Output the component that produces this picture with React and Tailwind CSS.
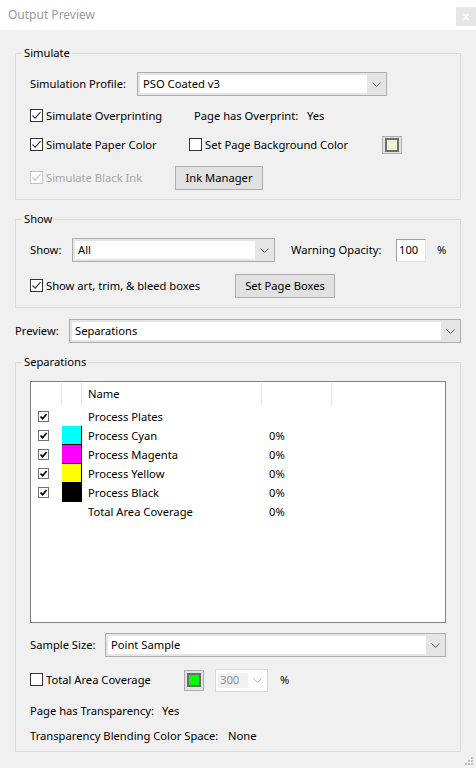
import { useState } from 'react'

const FONT = "font-['Noto_Sans','DejaVu_Sans',sans-serif] text-[11.2px]"

function Check({ checked, disabled }) {
  return (
    <span className={`w-[13px] h-[13px] shrink-0 border bg-white flex items-center justify-center ${disabled ? 'border-[#c4c4c4]' : 'border-[#333333]'}`}>
      {checked && (
        <svg width="11" height="11" viewBox="0 0 11 11">
          <polyline points="1.5,5.5 4.2,8.2 9.5,2.2" fill="none" stroke={disabled ? '#c4c4c4' : '#333333'} strokeWidth="1.1" />
        </svg>
      )}
    </span>
  )
}

function SmallCheck() {
  return (
    <span className="w-[11px] h-[11px] border border-[#707070] bg-white flex items-center justify-center">
      <svg width="9" height="9" viewBox="0 0 9 9">
        <polyline points="1.5,4.5 3.6,6.8 7.6,2" fill="none" stroke="#000" strokeWidth="1.7" />
      </svg>
    </span>
  )
}

function Chevron({ color = '#555555' }) {
  return (
    <svg width="9" height="5" viewBox="0 0 9 5">
      <polyline points="0.5,0.5 4.5,4.5 8.5,0.5" fill="none" stroke={color} strokeWidth="1" />
    </svg>
  )
}

function Dropdown({ w, value }) {
  return (
    <div className={`${w} h-[24px] border border-[#adadad] bg-[#e5e5e5] flex items-center`}>
      <div className="flex-1 h-[18px] ml-[2px] bg-white flex items-center pl-[3px] leading-none">{value}</div>
      <div className="w-[19px] flex items-center justify-center"><Chevron /></div>
    </div>
  )
}

function Button({ w, children }) {
  return (
    <div className={`${w} h-[24px] border border-[#adadad] bg-[#e1e1e1] flex items-center justify-center`}>{children}</div>
  )
}

function Swatch({ color, h = 'h-[18px]' }) {
  return (
    <div className={`w-[20px] ${h} border border-[#adadad] bg-[#e1e1e1] flex items-center justify-center`}>
      <div className="w-[14px] h-[14px] border-2 border-[#6d6d6d]" style={{ background: color }} />
    </div>
  )
}

function Group({ title, children, className = '' }) {
  return (
    <fieldset className={`border border-[#dcdcdc] pl-[14px] pb-[9px] ${className}`}>
      <legend className="ml-[-8px] px-[2px] leading-[16px]">{title}</legend>
      {children}
    </fieldset>
  )
}

const plates = [
  { name: 'Process Plates', check: true },
  { name: 'Process Cyan', check: true, color: 'bg-[#00ffff]', pct: '0%' },
  { name: 'Process Magenta', check: true, color: 'bg-[#ff00ff]', pct: '0%' },
  { name: 'Process Yellow', check: true, color: 'bg-[#ffff00]', pct: '0%' },
  { name: 'Process Black', check: true, color: 'bg-[#000000]', pct: '0%' },
  { name: 'Total Area Coverage', pct: '0%' },
]

export default function App() {
  const [opacity] = useState('100')

  return (
    <div className={`w-[476px] h-[768px] bg-[#f0f0f0] text-black relative overflow-hidden ${FONT}`}>
      <div className="h-[30px] bg-white flex items-start justify-between">
        <span className="pl-[8px] pt-[6px] text-[#9a9a9a] text-[12px]">Output Preview</span>
        <div className="mt-[7px] w-[20px] h-[19px] bg-[#e6e6e6] flex items-center justify-center text-white text-[10px] font-bold">x</div>
      </div>

      <div className="px-[15px] pt-[15px]">
        <Group title="Simulate">
          <div className="mt-[11px] h-[24px] flex items-center">
            <span className="w-[107px]">Simulation Profile:</span>
            <Dropdown w="w-[250px]" value="PSO Coated v3" />
          </div>
          <div className="mt-[10px] h-[20px] flex items-center">
            <div className="w-[164px] flex items-center gap-[3px]"><Check checked /><span>Simulate Overprinting</span></div>
            <span className="w-[113px]">Page has Overprint:</span>
            <span>Yes</span>
          </div>
          <div className="mt-[9px] h-[20px] flex items-center">
            <div className="w-[159px] flex items-center gap-[3px]"><Check checked /><span>Simulate Paper Color</span></div>
            <div className="w-[193px] flex items-center gap-[3px]"><Check /><span>Set Page Background Color</span></div>
            <Swatch color="#efefd6" />
          </div>
          <div className="mt-[11px] h-[24px] flex items-center">
            <div className="w-[145px] flex items-center gap-[3px] text-[#a6a6a6]"><Check checked disabled /><span>Simulate Black Ink</span></div>
            <Button w="w-[88px]">Ink Manager</Button>
          </div>
        </Group>

        <Group title="Show" className="mt-[11px]">
          <div className="mt-[11px] h-[24px] flex items-center">
            <span className="w-[42px]">Show:</span>
            <Dropdown w="w-[203px]" value="All" />
            <span className="ml-[16px] w-[105px]">Warning Opacity:</span>
            <div className="w-[30px] h-[23px] bg-white border-t border-l border-[#a0a0a0] border-r-[#e3e3e3] border-b-[#e3e3e3] border-r border-b flex items-center pl-[2px]">{opacity}</div>
            <span className="ml-[11px]">%</span>
          </div>
          <div className="mt-[12px] h-[24px] flex items-center">
            <div className="w-[205px] flex items-center gap-[3px]"><Check checked /><span>Show art, trim, &amp; bleed boxes</span></div>
            <Button w="w-[100px]">Set Page Boxes</Button>
          </div>
        </Group>

        <div className="mt-[11px] h-[24px] flex items-center">
          <span className="w-[54px]">Preview:</span>
          <div className="flex-1"><Dropdown w="w-full" value="Separations" /></div>
        </div>

        <Group title="Separations" className="mt-[11px] !pb-[5px]">
          <div className="mt-[11px] w-[416px] h-[242px] border border-[#828282] bg-white">
            <div className="h-[25px] pt-[1px] flex">
              <div className="w-[31px] h-[23px] border-r border-[#e5e5e5]" />
              <div className="w-[20px] h-[23px] border-r border-[#e5e5e5]" />
              <div className="w-[180px] h-[23px] border-r border-[#e5e5e5] pl-[6px] flex items-center">Name</div>
              <div className="w-[70px] h-[23px] border-r border-[#e5e5e5]" />
            </div>
            {plates.map(p => (
              <div key={p.name} className="h-[19px] flex items-center">
                <div className="w-[31px] pl-[7px] flex items-center">{p.check && <SmallCheck />}</div>
                <div className="w-[20px] h-full">
                  {p.color && <div className={`w-full h-full border-r border-b border-black ${p.color}`} />}
                </div>
                <div className="w-[180px] pl-[6px] pt-[1px]">{p.name}</div>
                <div className="pl-[7px] pt-[1px]">{p.pct}</div>
              </div>
            ))}
          </div>

          <div className="mt-[10px] h-[24px] flex items-center">
            <span className="w-[75px]">Sample Size:</span>
            <Dropdown w="w-[341px]" value="Point Sample" />
          </div>

          <div className="mt-[11px] h-[24px] flex items-center">
            <div className="w-[154px] flex items-center gap-[3px]"><Check /><span>Total Area Coverage</span></div>
            <Swatch color="#00ff00" h="h-[21px]" />
            <div className="ml-[11px] w-[53px] h-[23px] border border-[#d9d9d9] bg-white flex items-center">
              <div className="ml-[2px] w-[30px] h-[15px] bg-[#f0f0f0] flex items-center pl-[2px] text-[#8a8f99]">300</div>
              <div className="flex-1 flex items-center justify-center"><Chevron color="#b5b5b5" /></div>
            </div>
            <span className="ml-[12px]">%</span>
          </div>

          <div className="mt-[9px] h-[20px] flex items-center">
            <span className="w-[132px]">Page has Transparency:</span>
            <span>Yes</span>
          </div>
          <div className="mt-[5px] h-[20px] flex items-center">
            <span className="w-[198px]">Transparency Blending Color Space:</span>
            <span>None</span>
          </div>
        </Group>
      </div>

      <div className="absolute right-[3px] bottom-[3px] grid grid-cols-3 gap-[1px]">
        <span className="w-[2px] h-[2px]" /><span className="w-[2px] h-[2px]" /><span className="w-[2px] h-[2px] bg-[#bcbcbc]" />
        <span className="w-[2px] h-[2px]" /><span className="w-[2px] h-[2px] bg-[#bcbcbc]" /><span className="w-[2px] h-[2px] bg-[#bcbcbc]" />
        <span className="w-[2px] h-[2px] bg-[#bcbcbc]" /><span className="w-[2px] h-[2px] bg-[#bcbcbc]" /><span className="w-[2px] h-[2px] bg-[#bcbcbc]" />
      </div>
    </div>
  )
}
